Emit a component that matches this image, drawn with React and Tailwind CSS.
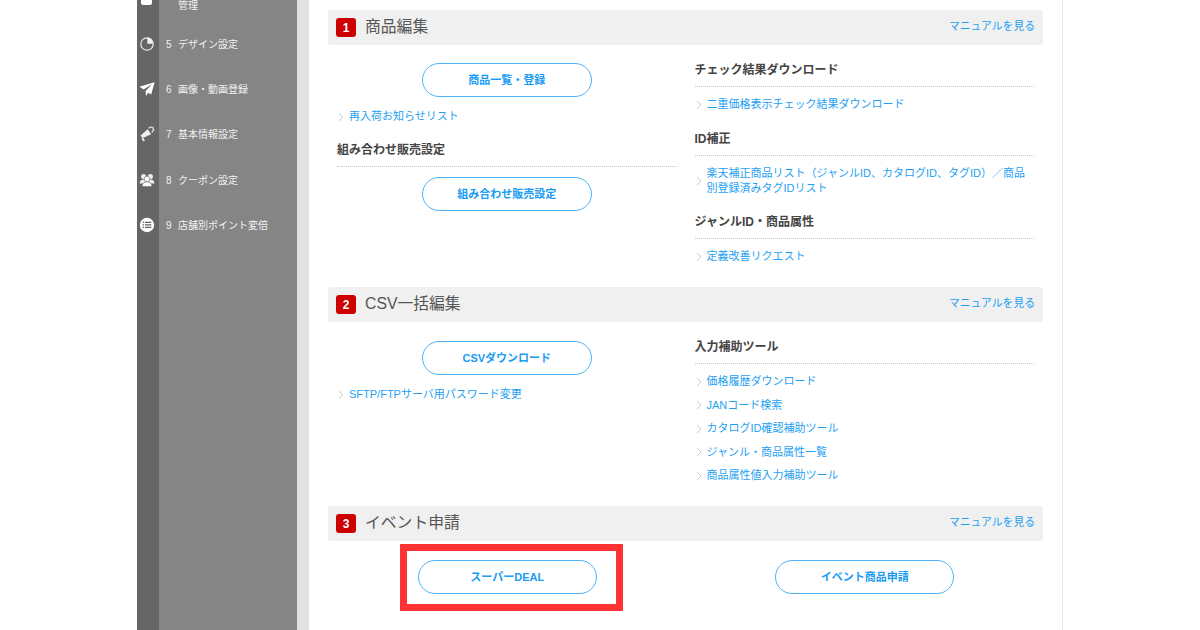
import React from "react";

const FONT = "font-['Liberation_Sans','Noto_Sans_CJK_JP',sans-serif]";

const PieIcon = () => (
  <svg width="16" height="16" viewBox="0 0 16 16">
    <circle cx="8" cy="8" r="6.2" fill="none" stroke="#e8e8e8" strokeWidth="1.2" />
    <path d="M8.4 1.6A6.2 6.2 0 0 1 14.2 7.8H8.4Z" fill="#f2f2f2" />
  </svg>
);

const PlaneIcon = () => (
  <svg width="16" height="16" viewBox="0 0 16 16">
    <path d="M15.6 1.2L0.4 5.8l4.2 2.6L13 3.2 6.6 10l0.4 5 2.2-3.2 3 1.6Z" fill="#fff" />
  </svg>
);

const HornIcon = () => (
  <svg width="16" height="16" viewBox="0 0 16 16">
    <path d="M1.4 9.8l7.2-6.6 3.6 5-8.4 3.8Z" fill="#f0f0f0" />
    <path d="M9.6 2.4c1.4-1.4 3.2-1.7 4.1-.5 1 1.2.5 3.2-1 4.6" fill="none" stroke="#e4e4e4" strokeWidth="1.2" />
    <path d="M4 11.8l2 2.8-1.6.9-2-3Z" fill="#f0f0f0" />
    <path d="M14.2 1.2l1.2-.8M15 4h1" stroke="#ccc" strokeWidth=".7" />
  </svg>
);

const UsersIcon = () => (
  <svg width="16" height="16" viewBox="0 0 16 16">
    <circle cx="4.6" cy="4.6" r="2.5" fill="#eee" />
    <circle cx="11.4" cy="4.6" r="2.5" fill="#eee" />
    <path d="M0.6 11.6c0-2.6 1.6-4 4-4s4 1.4 3.4 4ZM8 11.6c-.6-2.6 1-4 3.4-4s4 1.4 4 4Z" fill="#eee" />
    <circle cx="8" cy="7" r="2.8" fill="#fff" stroke="#666" strokeWidth=".6" />
    <path d="M3.2 14.6c0-3 1.8-4.8 4.8-4.8s4.8 1.8 4.8 4.8Z" fill="#fff" stroke="#666" strokeWidth=".6" />
  </svg>
);

const ListIcon = () => (
  <svg width="16" height="16" viewBox="0 0 16 16">
    <circle cx="8" cy="8" r="7.2" fill="#fff" />
    <path d="M3.6 4.8h1.5v1.3H3.6zM6 4.8h6.4v1.3H6zM3.6 7.3h1.5v1.3H3.6zM6 7.3h6.4v1.3H6zM3.6 9.8h1.5v1.3H3.6zM6 9.8h6.4v1.3H6z" fill="#666" />
  </svg>
);

const MENU = [
  { no: "5", label: "デザイン設定", icon: <PieIcon /> },
  { no: "6", label: "画像・動画登録", icon: <PlaneIcon /> },
  { no: "7", label: "基本情報設定", icon: <HornIcon /> },
  { no: "8", label: "クーポン設定", icon: <UsersIcon /> },
  { no: "9", label: "店舗別ポイント変倍", icon: <ListIcon /> },
];

const Chevron = () => (
  <svg width="6" height="10" viewBox="0 0 6 10" className="shrink-0">
    <path d="M1 1l4 4-4 4" fill="none" stroke="#ccc" strokeWidth="1" />
  </svg>
);

const SectionHead = ({ no, title }) => (
  <div className="flex items-center h-[35px] bg-[#f0f0f0] rounded-[3px] pl-[8px] pr-[8px]">
    <span className="w-[20px] h-[19px] rounded-[3px] bg-[#cc0000] text-white text-[12px] font-bold flex items-center justify-center">
      {no}
    </span>
    <span className="ml-[9px] -mt-[2px] text-[15.8px] text-[#555]">{title}</span>
    <a className="ml-auto -mt-[2px] text-[10.8px] text-[#1e9ff2]">マニュアルを見る</a>
  </div>
);

const Pill = ({ children, className = "" }) => (
  <div
    className={`h-[34px] mx-auto rounded-full border-[1.5px] border-[#4fb3fb] flex items-center justify-center text-[11px] font-bold text-[#1a9bf5] ${className}`}
  >
    {children}
  </div>
);

const LinkRow = ({ children, className = "" }) => (
  <div className={`flex items-center gap-[5px] pl-[1px] text-[11px] leading-[15px] text-[#1e9ff2] ${className}`}>
    <Chevron />
    <span>{children}</span>
  </div>
);

const SubHead = ({ children, className = "" }) => (
  <div className={`border-b border-dotted border-[#ccc] text-[12px] font-bold text-[#444] h-[26px] ${className}`}>
    {children}
  </div>
);

export default function App() {
  return (
    <div className={`${FONT} w-[1200px] h-[630px] overflow-hidden bg-white flex`}>
      <div className="w-[137px] shrink-0" />

      {/* Sidebar */}
      <div className="w-[22px] shrink-0 bg-[#666666] flex flex-col items-center pr-[3px]">
        <div className="w-[11px] h-[5px] bg-white rounded-b-[2px] shrink-0" />
        <div className="flex flex-col items-center pt-[30.5px] gap-[29.4px]">
          {MENU.map((m) => (
            <div key={m.no} className="h-[16px] flex items-center justify-center">
              {m.icon}
            </div>
          ))}
        </div>
      </div>
      <div className="w-[138px] shrink-0 bg-[#858585] text-[10px] text-[#f2f2f2] pl-[7px]">
        <div className="h-[12px] pl-[12px] leading-[11px]">管理</div>
        <div className="flex flex-col pt-[24.5px] gap-[30px]">
          {MENU.map((m) => (
            <div key={m.no} className="h-[15.4px] flex items-center">
              <span className="w-[12px]">{m.no}</span>
              <span>{m.label}</span>
            </div>
          ))}
        </div>
      </div>
      <div className="w-[12px] shrink-0 bg-[#e1e1e1]" />

      {/* Content */}
      <div className="relative w-[754px] shrink-0 border-r border-[#e8e8e8] pl-[19px] pr-[19px] pt-[10px]">
        <SectionHead no="1" title="商品編集" />
        <div className="grid grid-cols-2 gap-[18px] h-[242px]">
          <div className="pl-[9px] pt-[18px]">
            <Pill className="w-[170px]">商品一覧・登録</Pill>
            <LinkRow className="mt-[12px]">再入荷お知らせリスト</LinkRow>
            <SubHead className="mt-[17px]">組み合わせ販売設定</SubHead>
            <Pill className="w-[170px] mt-[10px]">組み合わせ販売設定</Pill>
          </div>
          <div className="pr-[9px] pt-[16px]">
            <SubHead>チェック結果ダウンロード</SubHead>
            <LinkRow className="mt-[10px]">二重価格表示チェック結果ダウンロード</LinkRow>
            <SubHead className="mt-[18px]">ID補正</SubHead>
            <LinkRow className="mt-[10px]">楽天補正商品リスト（ジャンルID、カタログID、タグID）／商品別登録済みタグIDリスト</LinkRow>
            <SubHead className="mt-[17px]">ジャンルID・商品属性</SubHead>
            <LinkRow className="mt-[10px]">定義改善リクエスト</LinkRow>
          </div>
        </div>

        <SectionHead no="2" title="CSV一括編集" />
        <div className="grid grid-cols-2 gap-[18px] h-[184px]">
          <div className="pl-[9px] pt-[19px]">
            <Pill className="w-[170px]">CSVダウンロード</Pill>
            <LinkRow className="mt-[12px]">SFTP/FTPサーバ用パスワード変更</LinkRow>
          </div>
          <div className="pr-[9px] pt-[16px]">
            <SubHead>入力補助ツール</SubHead>
            <div className="mt-[10px] flex flex-col gap-[8.5px]">
              <LinkRow>価格履歴ダウンロード</LinkRow>
              <LinkRow>JANコード検索</LinkRow>
              <LinkRow>カタログID確認補助ツール</LinkRow>
              <LinkRow>ジャンル・商品属性一覧</LinkRow>
              <LinkRow>商品属性値入力補助ツール</LinkRow>
            </div>
          </div>
        </div>

        <SectionHead no="3" title="イベント申請" />
        <div className="grid grid-cols-2 gap-[18px] pt-[19px]">
          <div className="pl-[10px]">
            <Pill className="w-[179px]">スーパーDEAL</Pill>
          </div>
          <div className="pr-[8px]">
            <Pill className="w-[179px]">イベント商品申請</Pill>
          </div>
        </div>

        {/* Highlight box over the button */}
        <div className="absolute left-[91px] top-[544px] w-[223px] h-[67px] border-[7px] border-[#ff3333]" />
      </div>
    </div>
  );
}
